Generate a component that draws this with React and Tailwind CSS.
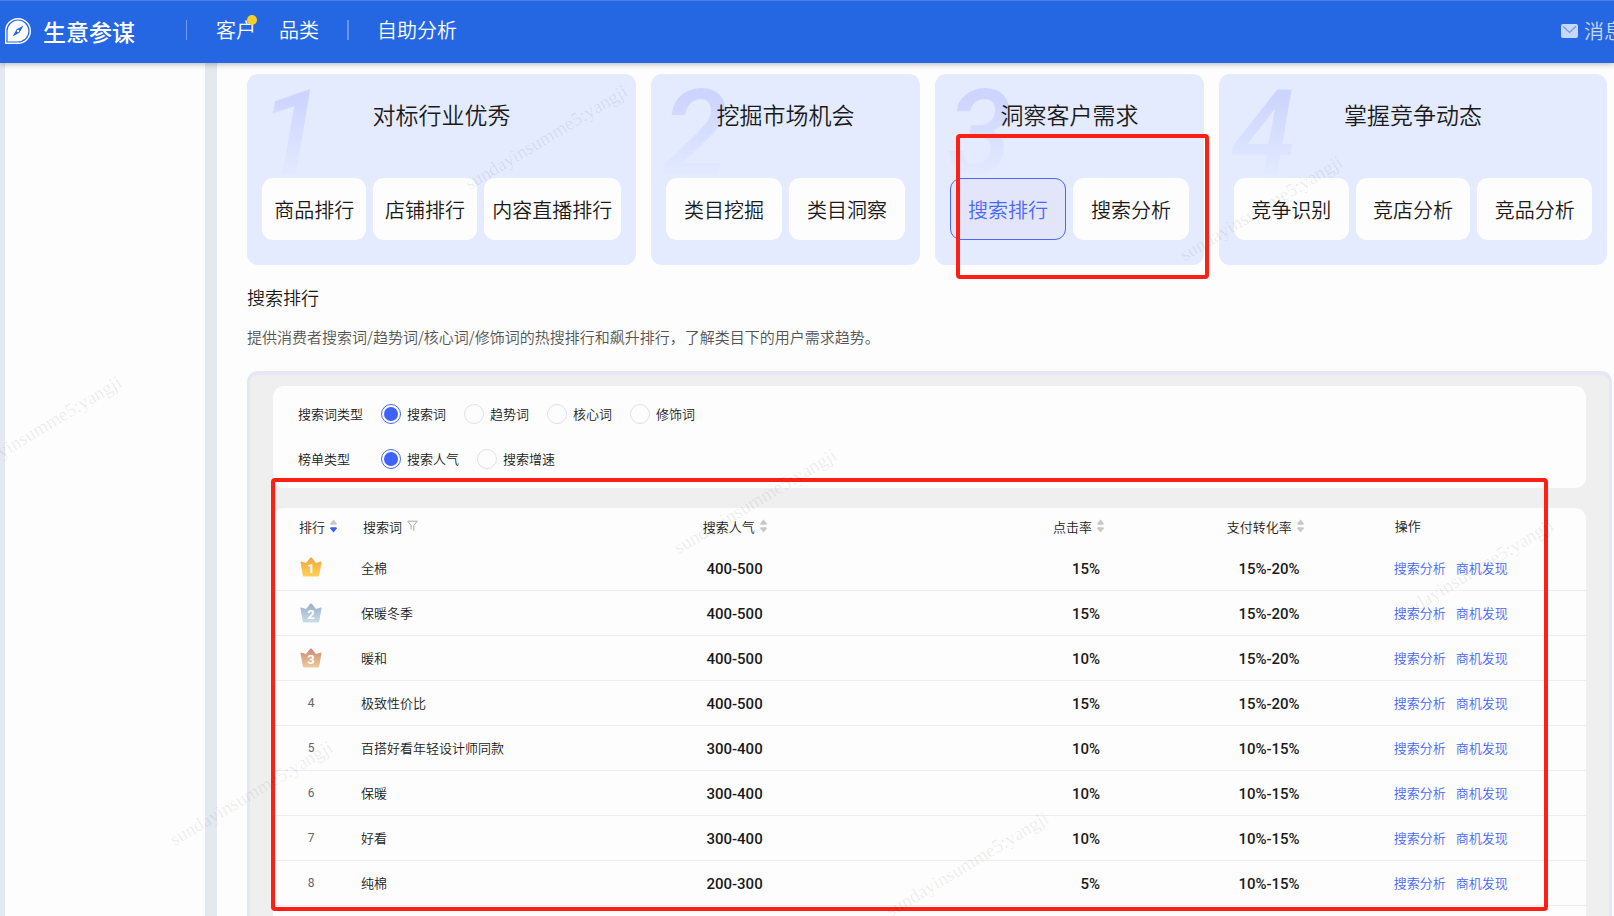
import React from "react";

const cards = [
  { no: "1", title: "对标行业优秀", items: ["商品排行", "店铺排行", "内容直播排行"], cols: "grid-cols-[104fr_103fr_137fr]" },
  { no: "2", title: "挖掘市场机会", items: ["类目挖掘", "类目洞察"], cols: "grid-cols-2" },
  { no: "3", title: "洞察客户需求", items: ["搜索排行", "搜索分析"], cols: "grid-cols-2", active: "搜索排行", marked: true },
  { no: "4", title: "掌握竞争动态", items: ["竞争识别", "竞店分析", "竞品分析"], cols: "grid-cols-3" },
];

const rows = [
  ["全棉", "400-500", "15%", "15%-20%"],
  ["保暖冬季", "400-500", "15%", "15%-20%"],
  ["暖和", "400-500", "10%", "15%-20%"],
  ["极致性价比", "400-500", "15%", "15%-20%"],
  ["百搭好看年轻设计师同款", "300-400", "10%", "10%-15%"],
  ["保暖", "300-400", "10%", "10%-15%"],
  ["好看", "300-400", "10%", "10%-15%"],
  ["纯棉", "200-300", "5%", "10%-15%"],
];

const crownColors = [
  ["#f2a33a", "#ffd257"],
  ["#9daccb", "#c9dde8"],
  ["#c98a76", "#f0cb9c"],
];

function Logo() {
  return (
    <svg width="26" height="26" viewBox="0 0 26 26" aria-hidden="true">
      <path d="M0.7 25.3V13A12.3 12.3 0 1 1 13 25.3Z" fill="none" stroke="#fff" strokeWidth="1.4" />
      <path d="M2.6 23.4V13A10.4 10.4 0 1 1 13 23.4Z" fill="#fff" />
      <path d="M18.6 7.6L11.6 11.2L7.6 18.4L14.4 14.8Z" fill="#2566e3" />
      <circle cx="13" cy="13" r="1.2" fill="#fff" />
    </svg>
  );
}

function Crown({ rank }) {
  const [from, to] = crownColors[rank - 1];
  const id = `crown-${rank}`;
  return (
    <svg width="22" height="20" viewBox="0 0 22 20" role="img" aria-label={`第${rank}名`}>
      <defs>
        <linearGradient id={id} x1="0" y1="0" x2="0" y2="1">
          <stop offset="0" stopColor={from} />
          <stop offset="1" stopColor={to} />
        </linearGradient>
      </defs>
      <path
        d="M0.5 5.2Q0.3 4.3 1.2 4.6L6 6L10.2 0.8Q11 0 11.8 0.8L16 6L20.8 4.6Q21.7 4.3 21.5 5.2L19.2 18.6Q19 19.6 18 19.6H4Q3 19.6 2.8 18.6Z"
        fill={`url(#${id})`}
      />
      <text x="11" y="16.4" textAnchor="middle" fontFamily="Roboto, sans-serif" fontSize="13" fontWeight="700" fill="#fff">
        {rank}
      </text>
    </svg>
  );
}

function Sorter({ desc }) {
  return (
    <svg width="7" height="14" viewBox="0 0 7 14" aria-hidden="true">
      <path d="M3.5 0.5L6.8 4.6Q7 5.8 5.8 5.8H1.2Q0 5.8 0.2 4.6Z" fill="#c8c8c8" />
      <path d="M3.5 13.5L6.8 9.4Q7 8.2 5.8 8.2H1.2Q0 8.2 0.2 9.4Z" fill={desc ? "#3b5bfd" : "#c8c8c8"} />
    </svg>
  );
}

function SortHead({ children, desc }) {
  return (
    <button type="button" className="inline-flex items-center gap-[5px] align-middle whitespace-nowrap">
      {children}
      <Sorter desc={desc} />
    </button>
  );
}

function RadioRow({ legend, name, options }) {
  return (
    <div role="radiogroup" aria-label={legend} className="flex h-[20px] items-center">
      <span className="w-[83px] shrink-0">{legend}</span>
      <div className="flex gap-[18px]">
        {options.map((o, i) => (
          <label key={o} className="flex items-center gap-[6px]">
            <input
              type="radio"
              name={name}
              defaultChecked={i === 0}
              className="grid size-[20px] appearance-none place-items-center rounded-full border border-[#dfe1ec] before:size-[14px] before:rounded-full checked:border-[#4a68fb] checked:before:bg-[#3f62fb]"
            />
            {o}
          </label>
        ))}
      </div>
    </div>
  );
}

function Watermark({ className }) {
  return (
    <span className={`absolute -translate-x-1/2 -translate-y-1/2 -rotate-31 font-['Liberation_Serif',serif] text-[19px] leading-none text-black/8 ${className}`}>
      sundayinsumme5:yangji
    </span>
  );
}

export default function App() {
  return (
    <div className="relative flex h-screen flex-col overflow-hidden bg-[#e4e8ef] font-['Noto_Sans_CJK_SC',sans-serif] text-[#1a1a1a]">
      <header className="relative z-10 flex h-[63px] shrink-0 items-center border-t border-[#4a80e6] bg-[#2566e3] pb-0.5 pl-[5px] text-white shadow-[0_1px_6px_rgba(0,0,0,0.3)]">
        <a href="#home" className="flex items-center gap-3">
          <Logo />
          <span className="text-[23px] leading-[28px] font-medium">生意参谋</span>
        </a>
        <nav className="flex items-center pb-0.5 text-[20px] leading-[24px] font-[350]">
          <span className="ml-[51px] h-5 w-px bg-white/35" />
          <a href="#customer" className="relative ml-[29px]">
            客户
            <span className="absolute -top-[3px] -right-px size-[10px] rounded-full bg-[#f5cf2a]" />
          </a>
          <a href="#category" className="ml-[23px]">品类</a>
          <span className="ml-[28px] h-5 w-0.5 bg-white/30" />
          <a href="#self" className="ml-[28px]">自助分析</a>
        </nav>
        <a href="#message" className="-mr-[10px] ml-auto flex items-center gap-[6px] text-[20px] leading-[24px] font-[350] text-white/75">
          <svg width="17" height="14" viewBox="0 0 17 14" aria-hidden="true">
            <rect width="17" height="14" rx="2" fill="#fff" fillOpacity="0.75" />
            <path d="M2 2.2L8.5 8.4L15 2.2" fill="none" stroke="#6f97e8" strokeWidth="1.2" />
          </svg>
          消息
        </a>
      </header>

      <div className="flex min-h-0 flex-1 pl-[5px]">
        <aside className="w-[200px] shrink-0 bg-[#fdfdfd]" />
        <main className="ml-3 flex min-w-0 flex-1 flex-col bg-[#fdfdfd] pl-[30px]">
          <section className="mt-[11px] mr-[7px] grid shrink-0 grid-cols-[389fr_269fr_269fr_388fr] gap-[15px]">
            {cards.map((c) => (
              <div key={c.no} className="relative h-[191px] rounded-[11px] bg-[#e4ebff] px-[15px]">
                <span
                  aria-hidden="true"
                  className="absolute top-[4px] left-2 bg-linear-to-b from-[#ccd4ff] from-15% to-[#e4ebff] to-90% bg-clip-text px-1 font-[Roboto,sans-serif] text-[118px] leading-[112px] font-medium text-transparent italic"
                >
                  {c.no}
                </span>
                <h2 className="relative pt-[24px] text-center text-[23px] leading-[32px] font-[350]">{c.title}</h2>
                <div className={`relative mt-[48px] grid gap-[7px] ${c.cols}`}>
                  {c.items.map((t) => (
                    <button
                      key={t}
                      type="button"
                      className={`h-[62px] rounded-[11px] border pt-0.5 text-[20px] font-[350] whitespace-nowrap ${t === c.active ? "border-[#4a68fb] bg-[#e3e6fb] text-[#4a68fb]" : "border-transparent bg-[#fdfdfd]"}`}
                    >
                      {t}
                    </button>
                  ))}
                </div>
                {c.marked && (
                  <div className="pointer-events-none absolute top-[60px] -right-[5px] -bottom-[14px] left-[21px] z-10 rounded-[4px] border-4 border-[#ff1f14]" />
                )}
              </div>
            ))}
          </section>

          <h1 className="mt-[20px] text-[18px] leading-[24px] font-[350]">搜索排行</h1>
          <p className="mt-[17px] text-[15px] leading-[22px] font-[350] text-[#555]">
            提供消费者搜索词/趋势词/核心词/修饰词的热搜排行和飙升排行，了解类目下的用户需求趋势。
          </p>

          <section className="mt-[23px] mr-[2px] flex flex-1 flex-col rounded-t-[11px] border-x-[3px] border-t-4 border-[#e4e8f4] bg-[#efefef] px-[23px] pt-[11px] text-[13px] font-[350]">
            <div className="flex h-[102px] shrink-0 flex-col gap-[25px] rounded-[11px] bg-[#fdfdfd] pt-[18px] pl-[25px]">
              <RadioRow legend="搜索词类型" name="word" options={["搜索词", "趋势词", "核心词", "修饰词"]} />
              <RadioRow legend="榜单类型" name="list" options={["搜索人气", "搜索增速"]} />
            </div>

            <div className="mt-5 flex-1 rounded-t-[11px] bg-[#fdfdfd]">
              <div className="relative">
                <table className="w-full table-fixed border-collapse">
                  <colgroup>
                    <col className="w-[6.7%]" />
                    <col className="w-[23.3%]" />
                    <col className="w-[7.6%]" />
                    <col className="w-[25.7%]" />
                    <col className="w-[15.2%]" />
                    <col />
                  </colgroup>
                  <thead>
                    <tr className="h-[37px] [&>th]:p-0 [&>th]:pb-0.5 [&>th]:font-[350]">
                      <th className="text-left"><div className="pl-[26px]"><SortHead desc>排行</SortHead></div></th>
                      <th className="text-left">
                        <button type="button" className="inline-flex items-center gap-[5px] pl-0.5 align-middle">
                          搜索词
                          <svg width="11" height="12" viewBox="0 0 11 12" fill="none" stroke="#a8a8a8" aria-hidden="true">
                            <path d="M0.7 1.2H10.3L6.9 5.4V10.8M0.7 1.2L4.1 5.4V9.4" />
                          </svg>
                        </button>
                      </th>
                      <th className="text-right"><SortHead>搜索人气</SortHead></th>
                      <th className="text-right"><SortHead>点击率</SortHead></th>
                      <th className="text-right"><SortHead>支付转化率</SortHead></th>
                      <th className="text-left"><div className="pl-[91px]">操作</div></th>
                    </tr>
                  </thead>
                  <tbody>
                    {rows.map(([word, heat, click, pay], i) => (
                      <tr key={word} className="h-[45px] border-b border-[#ebecf5]">
                        <td className="pl-[27px]">
                          <div className="grid w-[22px] place-items-center font-[Roboto,sans-serif] text-[12px] font-normal text-[#666]">
                            {i < 3 ? <Crown rank={i + 1} /> : i + 1}
                          </div>
                        </td>
                        <td className="whitespace-nowrap">{word}</td>
                        {[heat, click, pay].map((v, k) => (
                          <td key={k} className="pt-1 pr-1 text-right font-[Roboto,sans-serif] text-[15px] font-medium whitespace-nowrap">{v}</td>
                        ))}
                        <td className="pl-[90px]">
                          <div className="flex gap-[10px] whitespace-nowrap text-[#4a68fb]">
                            <a href="#analysis">搜索分析</a>
                            <a href="#chance">商机发现</a>
                          </div>
                        </td>
                      </tr>
                    ))}
                  </tbody>
                </table>
                <div className="pointer-events-none absolute -top-[30px] right-[38px] -bottom-[5px] -left-[2px] rounded-[4px] border-4 border-[#ff1f14]" />
              </div>
            </div>
          </section>
        </main>
      </div>

      <div aria-hidden="true" className="pointer-events-none absolute inset-0 overflow-hidden">
        <Watermark className="top-[428px] left-[40px]" />
        <Watermark className="top-[793px] left-[251px]" />
        <Watermark className="top-[137px] left-[546px]" />
        <Watermark className="top-[501px] left-[755px]" />
        <Watermark className="top-[864px] left-[967px]" />
        <Watermark className="top-[208px] left-[1261px]" />
        <Watermark className="top-[571px] left-[1472px]" />
      </div>
    </div>
  );
}
